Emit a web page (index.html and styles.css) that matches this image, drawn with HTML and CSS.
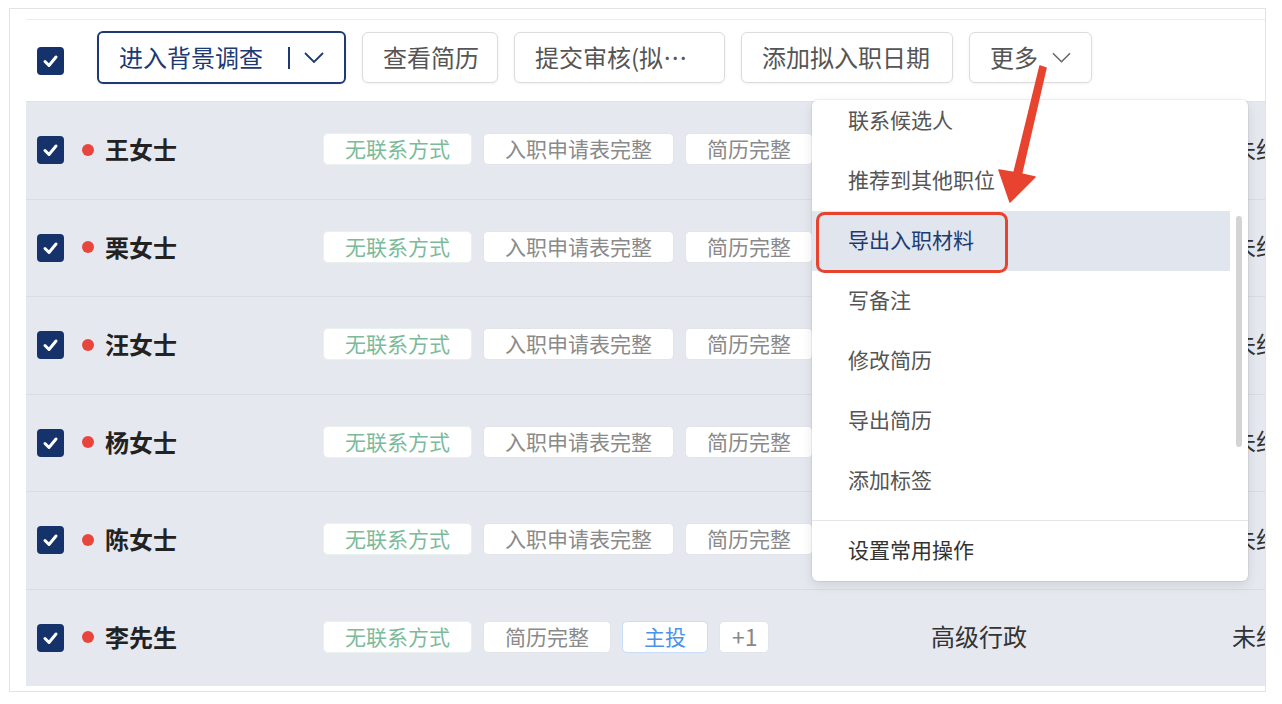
FILE: index.html
```html
<!DOCTYPE html>
<html lang="zh-CN">
<head>
    <meta charset="UTF-8">
    <meta name="viewport" content="width=device-width, initial-scale=1.0">
    <title>候选人列表</title>
    <link rel="stylesheet" href="styles.css">
</head>
<body>
    <div class="frame">
        <div class="toolbar">
            <span class="check check-head">
                <svg viewBox="0 0 27 28" width="27" height="28"><polyline points="8,14.5 12,18.5 19,10" fill="none" stroke="#fff" stroke-width="3" stroke-linecap="round" stroke-linejoin="round"/></svg>
            </span>
            <button class="btn btn-primary">
                <span>进入背景调查</span>
                <span class="split"></span>
                <svg class="chev" viewBox="0 0 20 11" width="20" height="11"><polyline points="1,1 10,10 19,1" fill="none" stroke="currentColor" stroke-width="1.8"/></svg>
            </button>
            <button class="btn btn-view">查看简历</button>
            <button class="btn btn-submit"><span class="ellipsis">提交审核(拟入职)</span></button>
            <button class="btn btn-date">添加拟入职日期</button>
            <button class="btn btn-more">
                <span>更多</span>
                <svg class="chev" viewBox="0 0 20 11" width="20" height="11"><polyline points="1,1 10,10 19,1" fill="none" stroke="currentColor" stroke-width="1.6"/></svg>
            </button>
        </div>

        <div class="rows" id="rows"></div>
    </div>

    <div class="menu">
        <div class="menu-scroll">
            <ul class="menu-list">
                <li>联系候选人</li>
                <li>推荐到其他职位</li>
                <li class="active">导出入职材料</li>
                <li>写备注</li>
                <li>修改简历</li>
                <li>导出简历</li>
                <li>添加标签</li>
            </ul>
            <div class="track"><div class="thumb"></div></div>
        </div>
        <div class="menu-foot">设置常用操作</div>
    </div>

    <svg class="annot" width="1282" height="704" viewBox="0 0 1282 704">
        <rect x="817.5" y="213.5" width="189" height="58" rx="7" fill="none" stroke="#e8432e" stroke-width="3"/>
        <polygon points="1040,66 1046,68 1021.5,174 1035,177 1010,202 999,170 1014,172.5" fill="#e8432e" stroke="#e8432e" stroke-width="1.5" stroke-linejoin="round"/>
    </svg>

    <script>
        const people = [
            { name: '王女士', tags: ['无联系方式', '入职申请表完整', '简历完整', '主投'] },
            { name: '栗女士', tags: ['无联系方式', '入职申请表完整', '简历完整', '主投'] },
            { name: '汪女士', tags: ['无联系方式', '入职申请表完整', '简历完整', '主投'] },
            { name: '杨女士', tags: ['无联系方式', '入职申请表完整', '简历完整', '主投'] },
            { name: '陈女士', tags: ['无联系方式', '入职申请表完整', '简历完整', '主投'] },
            { name: '李先生', tags: ['无联系方式', '简历完整', '主投', '+1'] }
        ];

        const rowsEl = document.getElementById('rows');
        const checkSvg = '<svg viewBox="0 0 27 28" width="27" height="28"><polyline points="8,14.5 12,18.5 19,10" fill="none" stroke="#fff" stroke-width="3" stroke-linecap="round" stroke-linejoin="round"/></svg>';

        people.forEach(p => {
            const tags = p.tags.map(t => {
                let cls = 'tag';
                if (t === '无联系方式') cls += ' tag-green';
                if (t === '主投') cls += ' tag-blue';
                if (t === '+1') cls += ' tag-more';
                return `<span class="${cls}">${t}</span>`;
            }).join('');

            const row = document.createElement('div');
            row.className = 'row';
            row.innerHTML = `
                <div class="cell-check"><span class="check">${checkSvg}</span></div>
                <div class="cell-name"><span class="dot"></span>${p.name}</div>
                <div class="cell-tags">${tags}</div>
                <div class="cell-pos">高级行政</div>
                <div class="cell-status">未约面试</div>
            `;
            rowsEl.appendChild(row);
        });
    </script>
</body>
</html>
```

FILE: styles.css
```css
body {
    margin: 0;
    background: #fff;
    font-family: "Noto Sans CJK SC", "Noto Sans", sans-serif;
    color: #333;
    position: relative;
    width: 1282px;
    height: 704px;
    overflow: hidden;
}

.frame {
    margin: 8px 0 0 9px;
    width: 1257px;
    box-sizing: border-box;
    border: 1px solid #e3e3e3;
    padding: 10px 0 5px 16px;
    overflow: hidden;
}

/* toolbar */
.toolbar {
    border-top: 1px solid #ededed;
    height: 81px;
    display: flex;
    align-items: flex-start;
    gap: 16px;
    padding-left: 11px;
}

.check {
    display: block;
    width: 27px;
    height: 28px;
    background: #15326a;
    border-radius: 4px;
}

.check svg {
    display: block;
}

.check-head {
    margin-top: 27px;
    margin-right: 17px;
}

.btn {
    margin-top: 12px;
    height: 51px;
    box-sizing: border-box;
    padding: 0 20px 3px;
    border: 1px solid #dcdcdc;
    border-radius: 6px;
    background: #fff;
    box-shadow: 0 1px 3px rgba(0, 0, 0, 0.06);
    font-family: inherit;
    font-size: 24px;
    color: #555;
    display: flex;
    align-items: center;
    white-space: nowrap;
}

.btn-primary {
    margin-top: 11px;
    height: 53px;
    width: 249px;
    padding-left: 20px;
    border: 2px solid #1d3a72;
    color: #1d3a72;
}

.split {
    width: 2px;
    height: 22px;
    background: #1d3a72;
    margin: 4px 14px 0 25px;
}

.chev {
    display: block;
    margin-top: 3px;
}

.btn-view {
    width: 136px;
}

.btn-submit {
    width: 211px;
}

.ellipsis {
    display: block;
    overflow: hidden;
    text-overflow: ellipsis;
    width: 100%;
    text-align: left;
}

.btn-date {
    width: 212px;
}

.btn-more {
    width: 123px;
}

.btn-more .chev {
    margin-left: 14px;
    color: #666;
}

/* rows */
.row {
    display: flex;
    align-items: center;
    height: 97.5px;
    box-sizing: border-box;
    border-top: 1px solid #d9dce3;
    background: #e5e8ef;
    padding-left: 11px;
    white-space: nowrap;
}

.row:first-child {
    border-top-color: #e0e3ea;
}

.cell-check {
    width: 45px;
    flex: none;
}

.cell-name {
    width: 241px;
    flex: none;
    display: flex;
    align-items: center;
    padding-bottom: 3px;
    font-size: 24px;
    font-weight: 700;
    color: #222;
}

.dot {
    width: 12px;
    height: 12px;
    border-radius: 50%;
    background: #e8463d;
    margin: 2px 11px 0 0;
}

.cell-tags {
    width: 608px;
    flex: none;
    display: flex;
    gap: 11px;
    overflow: hidden;
    padding-bottom: 2px;
}

.tag {
    height: 32px;
    box-sizing: border-box;
    padding: 0 21px 2px;
    border: 1px solid #e2e4e9;
    border-radius: 5px;
    background: #fff;
    font-size: 21px;
    line-height: 28px;
    color: #8a8a8a;
}

.tag-green {
    color: #7bbb9a;
    border-color: #e8f1ec;
}

.tag-blue {
    color: #4b93e8;
    border-color: #c8def7;
}

.tag-more {
    padding: 0 10px 2px 12px;
    font-size: 23px;
    color: #888;
}

.cell-pos {
    width: 301px;
    flex: none;
    padding-bottom: 4px;
    font-size: 24px;
    color: #333;
}

.cell-status {
    padding-bottom: 4px;
    font-size: 24px;
    color: #333;
}

/* dropdown menu */
.menu {
    position: absolute;
    left: 812px;
    top: 100px;
    width: 436px;
    background: #fff;
    border-radius: 6px;
    box-shadow: 0 0 0 1px rgba(0, 0, 0, 0.05), 0 4px 12px rgba(0, 0, 0, 0.1);
    overflow: hidden;
}

.menu-scroll {
    height: 420px;
    display: flex;
    overflow: hidden;
}

.menu-list {
    list-style: none;
    margin: -9px 0 0;
    padding: 0;
    width: 418px;
}

.menu-list li {
    height: 60px;
    box-sizing: border-box;
    line-height: 56px;
    padding: 0 0 4px 36px;
    font-size: 21px;
    color: #555;
}

.menu-list li.active {
    background: #e0e5ee;
    color: #1d3a72;
}

.track {
    width: 18px;
}

.thumb {
    margin: 116px 0 0 6px;
    width: 6px;
    height: 231px;
    border-radius: 3px;
    background: #d4d4d4;
}

.menu-foot {
    border-top: 1px solid #e6e6e6;
    height: 61px;
    box-sizing: border-box;
    line-height: 56px;
    padding: 0 0 4px 36px;
    font-size: 21px;
    color: #333;
}

.annot {
    position: absolute;
    left: 0;
    top: 0;
    pointer-events: none;
}
```
